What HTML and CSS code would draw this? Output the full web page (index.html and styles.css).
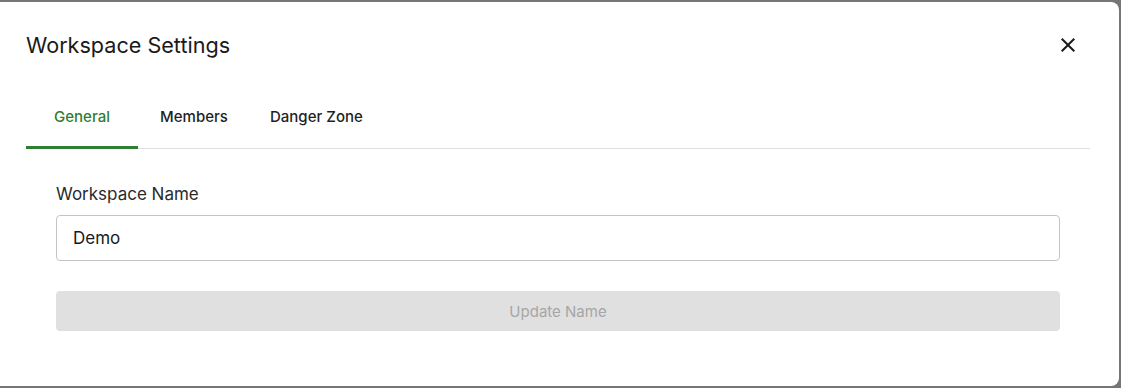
FILE: index.html
```html
<!DOCTYPE html>
<html lang="en">
<head>
<meta charset="utf-8">
<title>Workspace Settings</title>
<link rel="stylesheet" href="styles.css">
</head>
<body>
<div class="modal">
  <div class="header">
    <h2 class="title">Workspace Settings</h2>
    <button class="close" aria-label="Close">
      <svg viewBox="0 0 24 24" width="24" height="24"><path d="M19 6.41 17.59 5 12 10.59 6.41 5 5 6.41 10.59 12 5 17.59 6.41 19 12 13.41 17.59 19 19 17.59 13.41 12z" fill="#1a1a1a"/></svg>
    </button>
  </div>
  <div class="tabs">
    <div class="tab active">General</div>
    <div class="tab">Members</div>
    <div class="tab">Danger Zone</div>
  </div>
  <div class="panel">
    <label class="label" for="ws">Workspace Name</label>
    <input id="ws" class="input" type="text" value="Demo">
    <button class="update" disabled>Update Name</button>
  </div>
</div>
</body>
</html>
```
FILE: styles.css
```css
html, body {
  margin: 0;
  padding: 0;
}
body {
  background: #767676;
  width: 1121px;
  height: 388px;
  overflow: hidden;
  font-family: Inter, "Liberation Sans", sans-serif;
}
.modal {
  margin-top: 2px;
  width: 1119px;
  height: 384px;
  background: #fff;
  border-radius: 0 8px 8px 0;
  box-sizing: border-box;
  padding: 0 29px 0 26px;
}
.header {
  display: flex;
  align-items: center;
  justify-content: space-between;
  padding-top: 21px;
  height: 44px;
}
.title {
  margin: 0;
  font-size: 21.6px;
  font-weight: 400;
  line-height: 28px;
  color: #1a1a1a;
}
.close {
  width: 44px;
  height: 44px;
  padding: 10px;
  border: 0;
  background: transparent;
  display: flex;
  align-items: center;
  justify-content: center;
  box-sizing: border-box;
  cursor: pointer;
}
.close svg { display: block; }
.tabs {
  display: flex;
  margin-top: 17px;
  border-bottom: 1px solid #e0e0e0;
}
.tab {
  min-width: 112px;
  box-sizing: border-box;
  padding: 2px 20px 0;
  height: 65px;
  margin-bottom: -1px;
  border-bottom: 3px solid transparent;
  display: flex;
  align-items: center;
  justify-content: center;
  font-size: 15px;
  font-weight: 500;
  color: #1f1f1f;
}
.tab.active {
  color: #2e7d32;
  border-bottom-color: #2e7d32;
}
.panel {
  padding: 33px 30px 0;
  display: flex;
  flex-direction: column;
}
.label {
  font-size: 17px;
  line-height: 24px;
  color: #2a2a2a;
}
.input {
  margin-top: 9px;
  height: 46px;
  box-sizing: border-box;
  border: 1px solid #c4c4c4;
  border-radius: 4px;
  padding: 0 16px;
  font-family: inherit;
  font-size: 17px;
  color: #1a1a1a;
  outline: none;
}
.update {
  margin-top: 30px;
  height: 40px;
  border: 0;
  border-radius: 4px;
  background: #e0e0e0;
  color: #a6a6a6;
  font-family: inherit;
  font-size: 15px;
  font-weight: 400;
}
```
